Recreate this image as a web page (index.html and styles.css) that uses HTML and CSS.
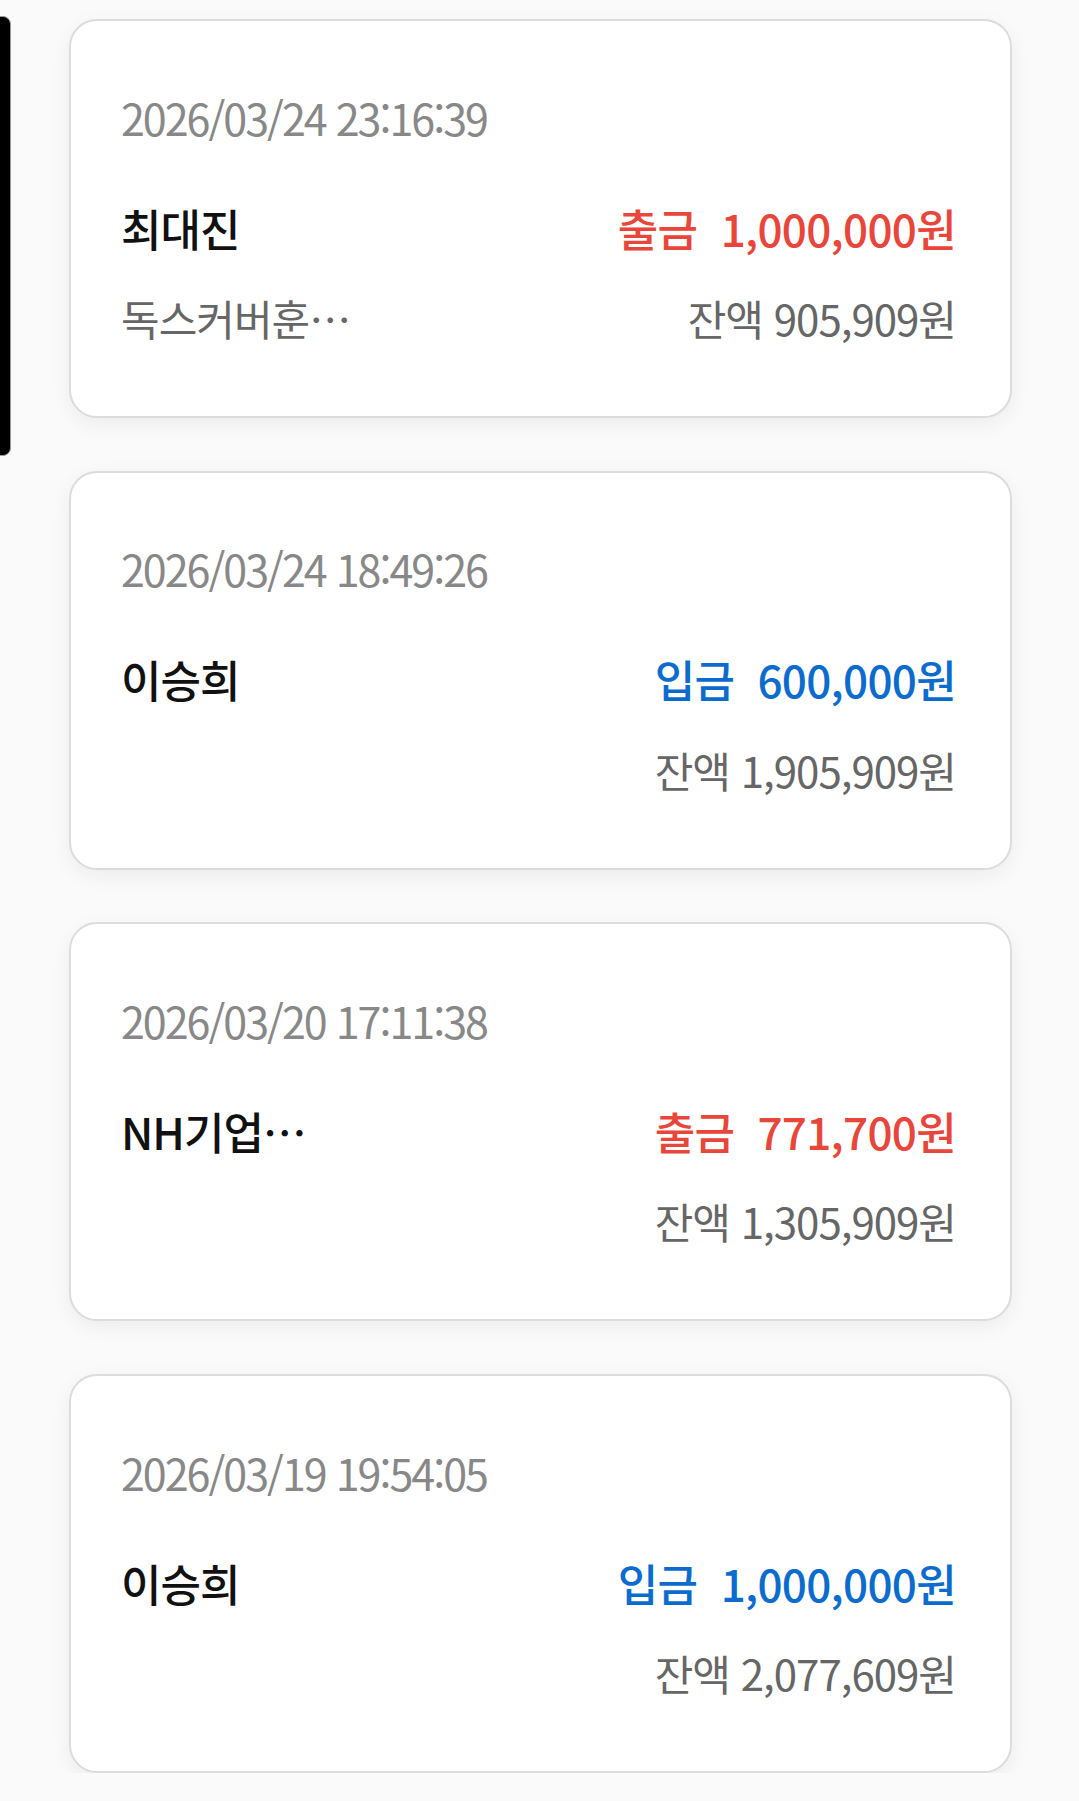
FILE: index.html
```html
<!DOCTYPE html>
<html lang="ko">
<head>
    <meta charset="UTF-8">
    <title>거래내역</title>
    <link rel="stylesheet" href="styles.css">
</head>
<body>
    <div class="scroll-thumb"></div>
    <div class="history-list">
        <div class="tx-card">
            <div class="tx-date">2026/03/24 23:16:39</div>
            <div class="tx-row tx-main">
                <span class="tx-name">최대진</span>
                <span class="tx-amount out">출금&nbsp; 1,000,000원</span>
            </div>
            <div class="tx-row tx-sub">
                <span class="tx-memo">독스커버훈…</span>
                <span class="tx-balance">잔액 905,909원</span>
            </div>
        </div>
        <div class="tx-card">
            <div class="tx-date">2026/03/24 18:49:26</div>
            <div class="tx-row tx-main">
                <span class="tx-name">이승희</span>
                <span class="tx-amount in">입금&nbsp; 600,000원</span>
            </div>
            <div class="tx-row tx-sub">
                <span class="tx-memo"></span>
                <span class="tx-balance">잔액 1,905,909원</span>
            </div>
        </div>
        <div class="tx-card">
            <div class="tx-date">2026/03/20 17:11:38</div>
            <div class="tx-row tx-main">
                <span class="tx-name">NH기업…</span>
                <span class="tx-amount out">출금&nbsp; 771,700원</span>
            </div>
            <div class="tx-row tx-sub">
                <span class="tx-memo"></span>
                <span class="tx-balance">잔액 1,305,909원</span>
            </div>
        </div>
        <div class="tx-card">
            <div class="tx-date">2026/03/19 19:54:05</div>
            <div class="tx-row tx-main">
                <span class="tx-name">이승희</span>
                <span class="tx-amount in">입금&nbsp; 1,000,000원</span>
            </div>
            <div class="tx-row tx-sub">
                <span class="tx-memo"></span>
                <span class="tx-balance">잔액 2,077,609원</span>
            </div>
        </div>
    </div>
</body>
</html>
```

FILE: styles.css
```css
body {
    margin: 0;
    background-color: #fafafa;
    font-family: "Noto Sans CJK KR", "Noto Sans", sans-serif;
    color: #111;
}
.scroll-thumb {
    position: absolute;
    left: -12px;
    top: 16px;
    width: 21px;
    height: 438px;
    background-color: #000;
    border: 1px solid #999;
    border-radius: 8px;
}
.history-list {
    display: flex;
    flex-direction: column;
    gap: 52.7px;
    width: 943px;
    padding: 19px 0 0 69px;
}
.tx-card {
    box-sizing: border-box;
    height: 399px;
    padding: 69.5px 54px 0 50px;
    background-color: #fff;
    border: 2px solid #dcdcdc;
    border-radius: 28px;
    box-shadow: 0 6px 20px rgba(0, 0, 0, 0.06);
}
.tx-date {
    font-size: 43px;
    line-height: 52px;
    color: #888;
    letter-spacing: -2px;
}
.tx-row {
    display: flex;
    justify-content: space-between;
    align-items: baseline;
}
.tx-main {
    margin-top: 59px;
    font-size: 44px;
    line-height: 52px;
}
.tx-name {
    font-weight: 500;
    color: #111;
    letter-spacing: -1px;
}
.tx-amount {
    font-weight: 500;
    letter-spacing: -0.7px;
}
.tx-amount.out {
    color: #e8463b;
}
.tx-amount.in {
    color: #0b6cce;
}
.tx-sub {
    margin-top: 39.5px;
    font-size: 42px;
    line-height: 50px;
    color: #666;
    letter-spacing: -1px;
}
```
